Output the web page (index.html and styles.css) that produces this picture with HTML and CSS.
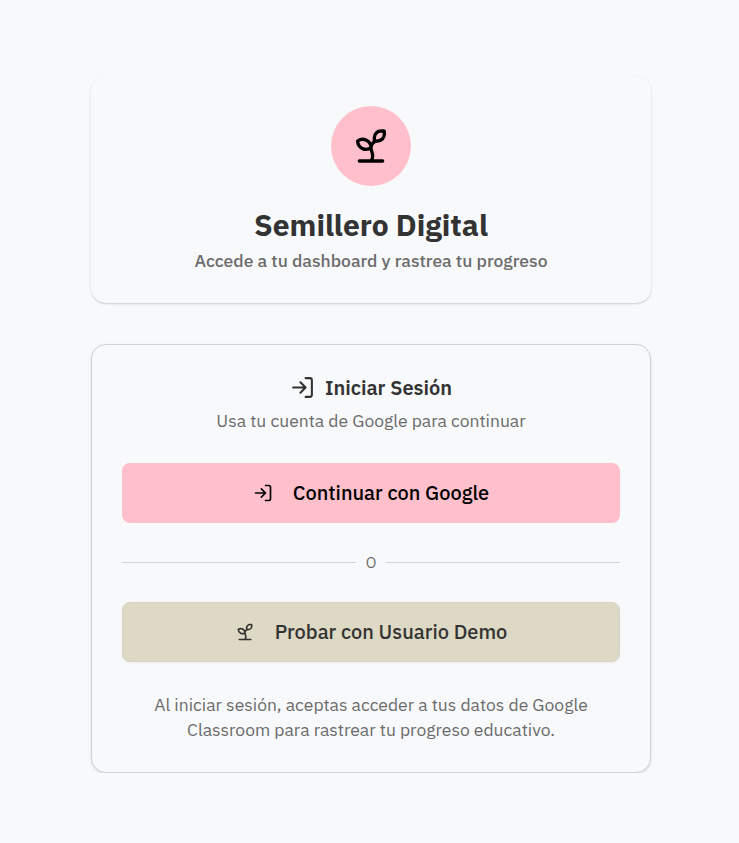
FILE: index.html
```html
<!DOCTYPE html>
<html lang="es">
<head>
<meta charset="utf-8">
<title>Semillero Digital</title>
<link rel="stylesheet" href="styles.css">
</head>
<body>
<svg class="defs" aria-hidden="true">
  <symbol id="sprout" viewBox="0 0 24 24"><path d="M14 9.536V7a4 4 0 0 1 4-4h1.5a.5.5 0 0 1 .5.5V5a4 4 0 0 1-4 4 4 4 0 0 0-4 4c0 2 1 3 1 5a5 5 0 0 1-1 3M4 9a5 5 0 0 1 8 4 5 5 0 0 1-8-4M5 21h14"/></symbol>
  <symbol id="login" viewBox="0 0 24 24"><path d="m10 17 5-5-5-5M15 12H3M15 3h4a2 2 0 0 1 2 2v14a2 2 0 0 1-2 2h-4"/></symbol>
</svg>
<main class="page">
  <header class="card hero">
    <div class="logo"><svg class="icon icon-lg"><use href="#sprout"/></svg></div>
    <h1 class="title">Semillero Digital</h1>
    <p class="subtitle">Accede a tu dashboard y rastrea tu progreso</p>
  </header>
  <section class="card login">
    <h2 class="heading"><svg class="icon icon-md"><use href="#login"/></svg><span>Iniciar Sesión</span></h2>
    <p class="hint">Usa tu cuenta de Google para continuar</p>
    <button class="btn primary"><svg class="icon icon-sm"><use href="#login"/></svg><span>Continuar con Google</span></button>
    <div class="divider"><span>O</span></div>
    <button class="btn demo"><svg class="icon icon-sm"><use href="#sprout"/></svg><span>Probar con Usuario Demo</span></button>
    <p class="terms">Al iniciar sesión, aceptas acceder a tus datos de Google Classroom para rastrear tu progreso educativo.</p>
  </section>
</main>
</body>
</html>
```
FILE: styles.css
```css
* { box-sizing: border-box; margin: 0; }
body {
  background: #f8f9fb;
  color: #333;
  font-family: "IBM Plex Sans", Roboto, "Liberation Sans", sans-serif;
}
.defs { display: none; }
.page {
  display: flex;
  flex-direction: column;
  gap: 41px;
  width: 560px;
  margin: 76px 0 0 91px;
}
.card {
  border-radius: 15px;
  padding: 30px;
  text-align: center;
  background: #f8f9fb;
}
.hero {
  height: 227px;
  box-shadow: 0 1px 3px rgba(0, 0, 0, .1), 0 1px 2px -1px rgba(0, 0, 0, .25);
}
.logo {
  display: flex;
  align-items: center;
  justify-content: center;
  width: 80px;
  height: 80px;
  margin: 0 auto 20px;
  border-radius: 50%;
  background: #ffc0cb;
  color: #000;
}
.icon {
  flex: none;
  fill: none;
  stroke: currentColor;
  stroke-width: 2;
  stroke-linecap: round;
  stroke-linejoin: round;
}
.icon-lg { width: 40px; height: 40px; }
.icon-md { width: 25px; height: 25px; }
.icon-sm { width: 20px; height: 20px; }
.title { font-size: 30px; line-height: 38px; font-weight: 700; }
.subtitle { margin-top: 2px; font-size: 17.5px; line-height: 30px; font-weight: 500; color: #6b6b6b; }
.login {
  height: 429px;
  padding: 29px 30px;
  border: 1px solid #d1d2d5;
  box-shadow: 0 1px 3px rgba(0, 0, 0, .1), 0 1px 2px -1px rgba(0, 0, 0, .1);
}
.heading {
  display: flex;
  align-items: center;
  justify-content: center;
  gap: 10px;
  height: 27px;
  font-size: 20px;
  font-weight: 600;
}
.hint { margin-top: 7px; font-size: 17.5px; line-height: 25px; color: #6b6b6b; }
.btn {
  display: flex;
  align-items: center;
  justify-content: center;
  gap: 20px;
  width: 100%;
  height: 60px;
  border: 0;
  border-radius: 8px;
  font: 500 20px/30px "IBM Plex Sans", Roboto, "Liberation Sans", sans-serif;
}
.primary { margin-top: 30px; background: #ffc0cb; color: #000; }
.demo {
  background: #ddd9c4;
  color: #333;
  border: 1px solid #d5d4cc;
  box-shadow: 0 1px 2px rgba(0, 0, 0, .05);
}
.divider {
  display: flex;
  align-items: center;
  gap: 10px;
  height: 79px;
  font-size: 15px;
  color: #6b6b6b;
}
.divider::before, .divider::after { content: ""; flex: 1; height: 1px; background: #d1d2d5; }
.terms { margin-top: 30px; font-size: 17.5px; line-height: 25px; color: #6b6b6b; }
```
